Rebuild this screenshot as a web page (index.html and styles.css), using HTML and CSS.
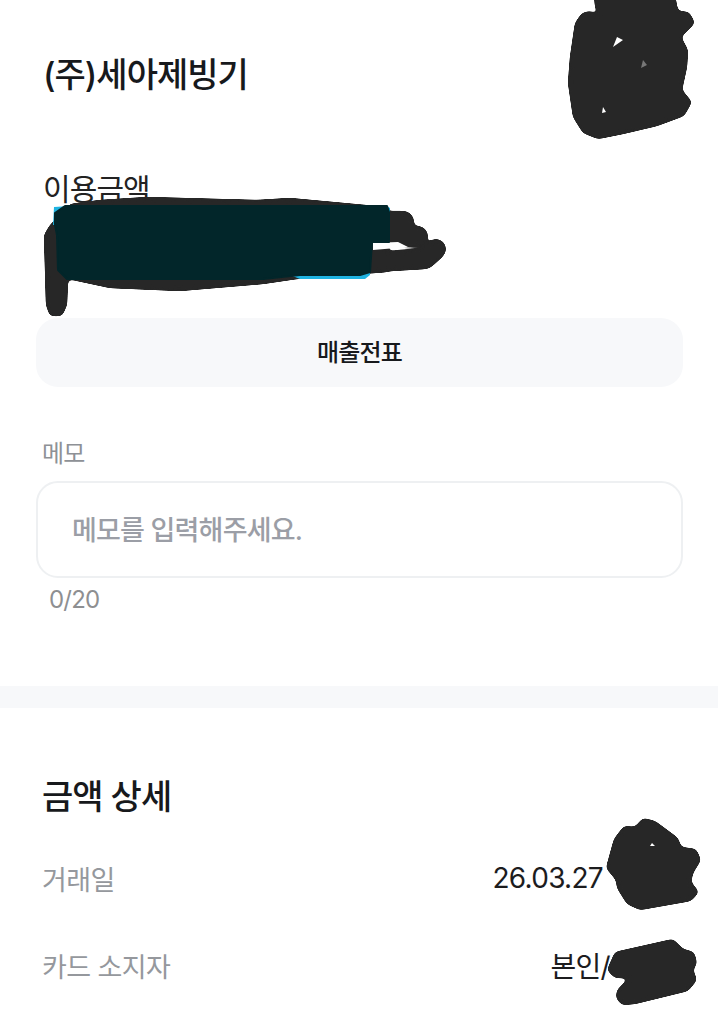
FILE: index.html
```html
<!DOCTYPE html>
<html lang="ko">
<head>
  <meta charset="UTF-8" />
  <meta name="viewport" content="width=device-width, initial-scale=1.0"/>
  <title>금액 상세</title>
  <link rel="stylesheet" href="styles.css">
</head>
<body>
  <div class="page">
    <section class="summary">
      <h1 class="store">(주)세아제빙기</h1>
      <p class="amount-label">이용금액</p>
      <button class="btn" type="button">매출전표</button>
      <p class="memo-label">메모</p>
      <div class="memo-box">메모를 입력해주세요.</div>
      <p class="memo-count">0/20</p>
    </section>

    <div class="divider"></div>

    <section class="detail">
      <h2>금액 상세</h2>
      <div class="row">
        <span class="row-name">거래일</span>
        <span class="row-value date">26.03.27</span>
      </div>
      <div class="row">
        <span class="row-name">카드 소지자</span>
        <span class="row-value owner">본인/</span>
      </div>
    </section>

    <!-- hand drawn marks over the private details -->
    <svg class="scribbles" width="718" height="1024" viewBox="0 0 718 1024" aria-hidden="true">
      <defs>
        <filter id="round" filterUnits="userSpaceOnUse" x="0" y="-30" width="718" height="1084" color-interpolation-filters="sRGB">
          <feGaussianBlur stdDeviation="2.5"/>
          <feColorMatrix values="1 0 0 0 0  0 1 0 0 0  0 0 1 0 0  0 0 0 12 -5"/>
        </filter>
      </defs>
      <g class="ink" filter="url(#round)">
        <path d="M593 -20 L595 7 L599 15 L590 11 L582 13 L575 23 L570 57 L568 83 L573 117 L583 133 L598 139 L623 134 L657 126 L684 116 L692 102 L682 90 L687 67 L688 50 L681 37 L695 23 L689 12 L678 11 L672 -20 Z"/>
        <path d="M70 204 L100 200 L147 197 L257 200 L290 198 L387 207 L388 272 L297 279 L263 284 L180 291 L110 288 L68 279 L67 305 L62 316 L50 316 L46 305 L44 235 L50 225 L57 218 Z"/>
        <path d="M606 868 L614 839 L624 826 L635 827 L643 818 L655 821 L678 838 L681 847 L696 849 L701 860 L693 873 L691 882 L699 892 L691 901 L640 910 L627 904 L617 888 L616 880 Z"/>
        <path d="M607 970 L615 952 L673 939 L683 949 L694 952 L697 963 L693 970 L697 980 L688 991 L635 1004 L622 1005 L616 998 L617 990 L629 978 L615 978 Z"/>
        <path class="stroke wide" d="M385 222 L403 222"/>
        <path class="stroke" d="M385 236 L418 236"/>
        <path class="stroke" d="M375 262 L425 259 L436 249"/>
      </g>
      <path class="gap" d="M373 243 L398 242 L408 247 L373 250 Z"/>
      <path class="cyan" d="M54 207 L70 206 L60 225 L53 225 Z M290 275 L370 270 L370 275 L365 279 L300 279 Z M385 205 L390 208 L390 214 Z"/>
      <path class="teal" d="M55 213 L65 206 L387 206 L389 212 L389 242 L372 242 L370 272 L360 275 L300 275 L263 279 L67 279 L58 270 L57 235 L55 225 Z"/>
      <path class="gap" d="M617 37 L623 40 L613 47 Z M603 107 L606 112 L602 113 Z M652 843 L655 846 L650 846 Z"/>
      <path class="hole" d="M643 60 L647 65 L641 68 Z"/>
    </svg>
  </div>
</body>
</html>
```

FILE: styles.css
```css
body {
  margin: 0;
  font-family: Inter, "Noto Sans CJK KR", sans-serif;
  background-color: #fff;
  overflow: hidden;
}

p, h1, h2 {
  margin: 0;
}

.page {
  position: relative;
  width: 718px;
  height: 1024px;
  overflow: hidden;
}

.summary {
  padding: 52px 35px 0 36px;
  height: 634px;
}

.store {
  margin-left: 7px;
  font-size: 34px;
  line-height: 46px;
  font-weight: 500;
  letter-spacing: -1px;
  color: #17191c;
}

.amount-label {
  margin: 71px 0 0 7px;
  font-size: 30px;
  line-height: 40px;
  letter-spacing: -0.9px;
  color: #222;
}

.btn {
  display: block;
  width: 100%;
  height: 69px;
  margin-top: 109px;
  padding: 0 0 5px;
  border: none;
  border-radius: 22px;
  background-color: #f7f8fa;
  font-family: inherit;
  font-size: 24px;
  font-weight: 500;
  letter-spacing: -0.8px;
  color: #17191c;
}

.memo-label {
  margin: 50px 0 0 6px;
  font-size: 24px;
  line-height: 34px;
  letter-spacing: -0.8px;
  color: #8e9196;
}

.memo-box {
  box-sizing: border-box;
  height: 97px;
  margin-top: 10px;
  padding: 28px 34px 0;
  border: 2px solid #eef0f2;
  border-radius: 22px;
  font-size: 27px;
  line-height: 40px;
  font-weight: 500;
  letter-spacing: -0.8px;
  color: #9b9ea6;
}

.memo-count {
  margin: 5px 0 0 13px;
  font-size: 24px;
  line-height: 34px;
  letter-spacing: -0.8px;
  color: #8e8f91;
}

.divider {
  height: 22px;
  background-color: #f7f8fa;
}

.detail {
  padding: 65px 0 0 42px;
}

h2 {
  font-size: 34px;
  line-height: 48px;
  font-weight: 500;
  letter-spacing: -1px;
  color: #17191c;
}

.row {
  display: flex;
  justify-content: space-between;
  align-items: center;
  height: 40px;
  margin-top: 47px;
}

.detail h2 + .row {
  margin-top: 37px;
}

.row-name {
  font-size: 27px;
  letter-spacing: -0.6px;
  color: #95989d;
}

.row-value {
  font-size: 28px;
  letter-spacing: -0.7px;
  color: #1c1c1e;
}

.date {
  margin-right: 115px;
}

.owner {
  margin-right: 108px;
}

.scribbles {
  position: absolute;
  top: 0;
  left: 0;
}

.ink path {
  fill: #272727;
}

.ink .stroke {
  fill: none;
  stroke: #272727;
  stroke-width: 20;
  stroke-linecap: round;
  stroke-linejoin: round;
}

.ink .wide {
  stroke-width: 22;
}

.teal {
  fill: #02262a;
  stroke: #02262a;
  stroke-width: 2;
  stroke-linejoin: round;
}

.cyan {
  fill: #1fb4e2;
}

.gap {
  fill: #fff;
}

.hole {
  fill: #777;
}
```
